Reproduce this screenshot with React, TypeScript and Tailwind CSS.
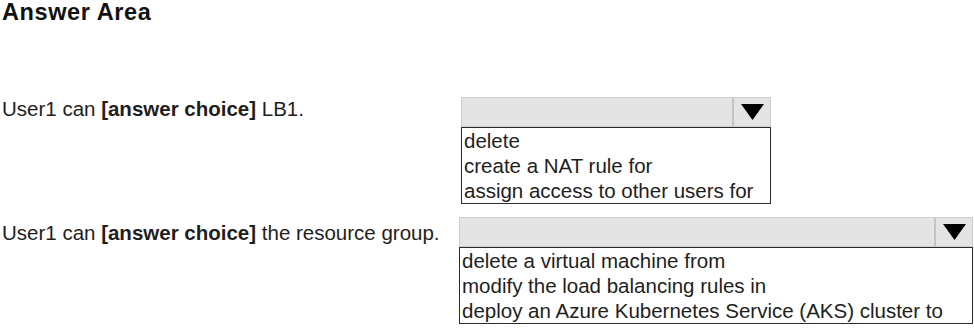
import React from "react";

type Choice = {
    label: React.ReactNode;
    options: string[];
    width: string;
};

function Arrow() {
    return (
        <svg width="23" height="16" viewBox="0 0 23 16" className="block">
            <polygon points="0,0 23,0 11.5,16" fill="#000" />
        </svg>
    );
}

function Dropdown({ options, width }: { options: string[]; width: string }) {
    return (
        <div className={width}>
            <div className="flex h-[30px] border border-[#cfcfcf] bg-[#e4e4e4]">
                <div className="flex-1" />
                <div className="flex w-[38px] items-center justify-center border-l-2 border-[#c4c4c4]">
                    <Arrow />
                </div>
            </div>
            <div className="border-[1.5px] border-[#2b2b2b] bg-white pl-[2px] text-[20.5px] leading-[25px] text-[#1e1e1e]">
                {options.map(option => <div key={option}>{option}</div>)}
            </div>
        </div>
    );
}

export default function App() {
    const choices: Choice[] = [
        {
            label: <>User1 can <b>[answer choice]</b> LB1.</>,
            options: ["delete", "create a NAT rule for", "assign access to other users for"],
            width: "w-[310px]",
        },
        {
            label: <>User1 can <b>[answer choice]</b> the resource group.</>,
            options: ["delete a virtual machine from", "modify the load balancing rules in", "deploy an Azure Kubernetes Service (AKS) cluster to"],
            width: "w-[514px]",
        },
    ];

    return (
        <div className="h-[330px] w-[974px] overflow-hidden bg-white font-['Liberation_Sans',Arial,sans-serif] text-[#1e1e1e]">
            <h1 className="pl-[2px] text-[23.5px] font-bold leading-[24px] tracking-[0.6px] text-[#111]">Answer Area</h1>
            <div className="mt-[70px] flex items-start">
                <div className="w-[461px] pl-[2px] text-[20.5px] leading-[30px]">{choices[0].label}</div>
                <div className="mt-[3px]">
                    <Dropdown options={choices[0].options} width={choices[0].width} />
                </div>
            </div>
            <div className="mt-[13px] flex items-start">
                <div className="w-[459px] pl-[2px] pt-[1px] text-[20.5px] leading-[30px]">{choices[1].label}</div>
                <Dropdown options={choices[1].options} width={choices[1].width} />
            </div>
        </div>
    );
}
